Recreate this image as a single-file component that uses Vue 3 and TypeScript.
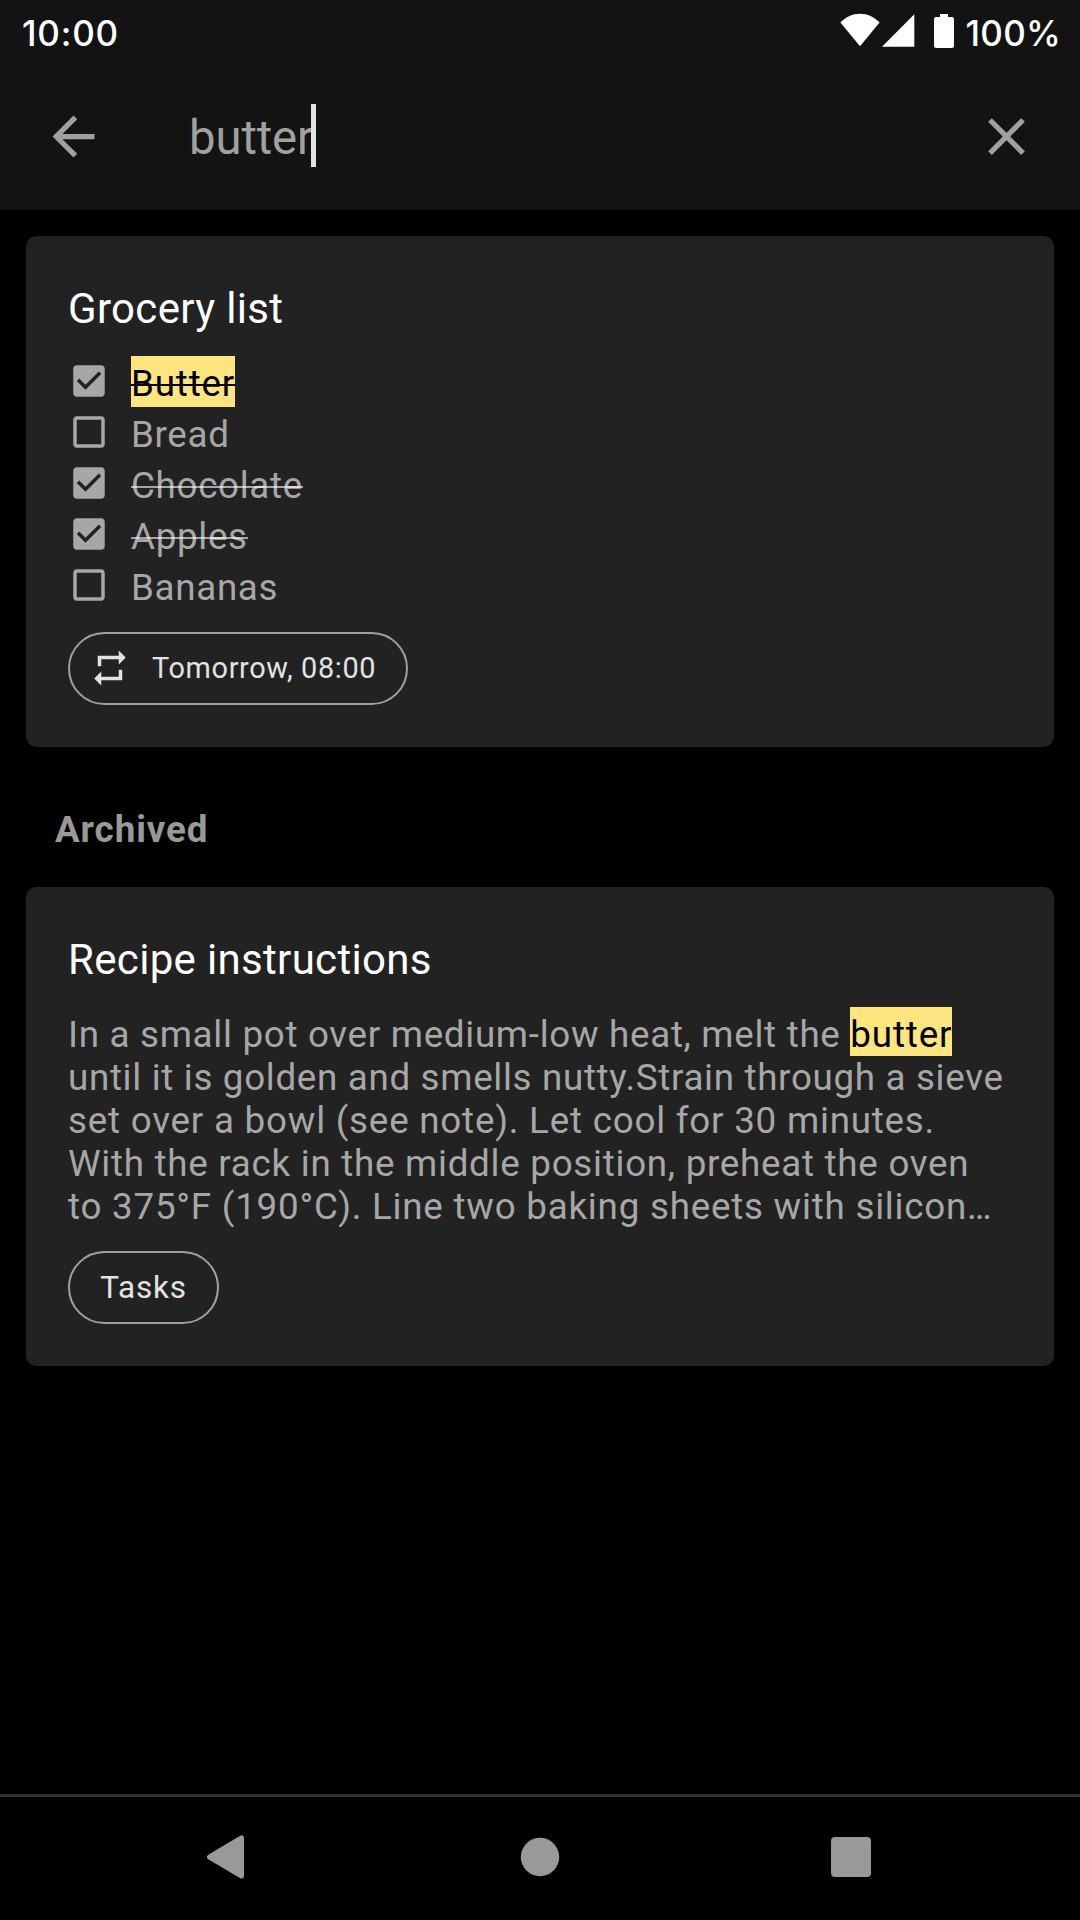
<script setup lang="ts">
interface Item {
  text: string
  done: boolean
  match?: boolean
}

interface Line {
  text: string
  hit?: string
  tracking: number
}

const items: Item[] = [
  { text: 'Butter', done: true, match: true },
  { text: 'Bread', done: false },
  { text: 'Chocolate', done: true },
  { text: 'Apples', done: true },
  { text: 'Bananas', done: false },
]

const query = 'butter'

const lines: Line[] = [
  { text: 'In a small pot over medium-low heat, melt the ', hit: query, tracking: 0.7 },
  { text: 'until it is golden and smells nutty.Strain through a sieve', tracking: 0.68 },
  { text: 'set over a bowl (see note). Let cool for 30 minutes.', tracking: 0.78 },
  { text: 'With the rack in the middle position, preheat the oven', tracking: 0.73 },
  { text: 'to 375°F (190°C). Line two baking sheets with silicon…', tracking: 0.77 },
]
</script>

<template>
  <div class="screen">
    <header class="top">
      <div class="status">
        <span class="clock">10:00</span>
        <div class="indicators">
          <svg class="wifi" width="40" height="34" viewBox="0 0 40 34" fill="#fff">
            <path d="M20 33.2 0.4 9.6C6 4 12.600 0.800 20 0.800S34 4 39.600 9.600z" />
          </svg>
          <svg class="signal" width="33" height="33" viewBox="0 0 33 33" fill="#fff">
            <path d="M32.300 0.300V32.800H0z" />
          </svg>
          <svg class="battery" width="20" height="34" viewBox="0 0 20 34" fill="#fff">
            <path d="M6 0h8v3h4a2 2 0 0 1 2 2v27a2 2 0 0 1-2 2H2a2 2 0 0 1-2-2V5a2 2 0 0 1 2-2h4z" />
          </svg>
          <span class="percent">100%</span>
        </div>
      </div>
      <div class="toolbar">
        <svg class="icon" viewBox="0 0 24 24">
          <path d="M20 11H7.830l5.590-5.590L12 4l-8 8 8 8 1.410-1.410L7.830 13H20v-2z" />
        </svg>
        <div class="query"><span>{{ query }}</span><i class="caret"></i></div>
        <svg class="icon" viewBox="0 0 24 24">
          <path d="M19 6.410L17.590 5 12 10.590 6.410 5 5 6.410 10.590 12 5 17.590 6.410 19 12 13.410 17.590 19 19 17.590 13.410 12z" />
        </svg>
      </div>
    </header>

    <main class="content">
      <section class="card">
        <h2>Grocery list</h2>
        <ul class="list">
          <li v-for="item in items" :key="item.text">
            <svg class="check" viewBox="0 0 24 24">
              <path v-if="item.done" d="M19 3H5c-1.110 0-2 .9-2 2v14c0 1.100.890 2 2 2h14c1.110 0 2-.9 2-2V5c0-1.100-.890-2-2-2zm-9 14l-5-5 1.410-1.410L10 14.170l7.590-7.590L19 8l-9 9z" />
              <path v-else d="M19 5v14H5V5h14m0-2H5c-1.100 0-2 .9-2 2v14c0 1.100.9 2 2 2h14c1.100 0 2-.9 2-2V5c0-1.100-.9-2-2-2z" />
            </svg>
            <span class="label" :class="{ done: item.done, hit: item.match }">{{ item.text }}</span>
          </li>
        </ul>
        <div class="chip reminder">
          <svg class="repeat" viewBox="0 0 24 24">
            <path d="M7 7h10v3l4-4-4-4v3H5v6h2V7zm10 10H7v-3l-4 4 4 4v-3h12v-6h-2v4z" />
          </svg>
          <span>Tomorrow, 08:00</span>
        </div>
      </section>

      <h3>Archived</h3>

      <section class="card">
        <h2>Recipe instructions</h2>
        <div class="body">
          <div v-for="line in lines" :key="line.text" :style="{ letterSpacing: line.tracking + 'px' }">{{ line.text }}<mark v-if="line.hit">{{ line.hit }}</mark></div>
        </div>
        <div class="chip label-chip"><span>Tasks</span></div>
      </section>
    </main>

    <nav class="nav">
      <svg class="back" width="38" height="44" viewBox="0 0 38 44">
        <path d="M34.500 3V41L2.500 22z" fill="#999" stroke="#999" stroke-width="5" stroke-linejoin="round" />
      </svg>
      <svg class="home" width="40" height="40" viewBox="0 0 40 40"><circle cx="20" cy="20" r="19.200" fill="#999" /></svg>
      <svg width="40" height="40" viewBox="0 0 40 40"><rect width="40" height="40" rx="4" fill="#999" /></svg>
    </nav>
  </div>
</template>

<style>
body {
  background: #000;
}
</style>

<style scoped>
.screen {
  width: 1080px;
  height: 1920px;
  display: flex;
  flex-direction: column;
  overflow: hidden;
  background: #000;
  font-family: Roboto, "Liberation Sans", sans-serif;
}
.screen * {
  box-sizing: border-box;
}
svg {
  display: block;
  flex: none;
}
.top {
  height: 210px;
  background: #131313;
}
.status {
  height: 63px;
  padding: 0 20px 0 22px;
  display: flex;
  justify-content: space-between;
  color: #fff;
  font: 500 35px/66px Inter, sans-serif;
}
.clock {
  letter-spacing: 0.8px;
}
.percent {
  margin-right: -1px;
  letter-spacing: 0.25px;
}
.indicators {
  display: flex;
}
.wifi {
  margin-top: 13px;
}
.signal {
  margin: 14px 0 0 2px;
}
.battery {
  margin: 14px 12px 0 19px;
}
.toolbar {
  height: 147px;
  padding: 0 42px;
  display: flex;
  align-items: center;
}
.icon {
  width: 63px;
  height: 63px;
  fill: #a0a0a0;
}
.query {
  flex: 1;
  margin-left: 84px;
  display: flex;
  align-items: center;
  color: #a0a0a0;
  font-size: 47.25px;
  line-height: 56px;
  letter-spacing: -0.1px;
}
.query span {
  padding-top: 3px;
}
.caret {
  width: 5px;
  height: 63px;
  margin: -2px 0 0 -1.500px;
  background: #e3e3e3;
}
.content {
  flex: 1;
  padding: 26px;
}
.card {
  background: #222;
  border-radius: 10.5px;
  padding: 48px 42px 42px;
}
h2 {
  margin: 0;
  color: #fff;
  font-size: 42px;
  font-weight: 400;
  line-height: 50px;
  letter-spacing: 0.33px;
}
.list {
  list-style: none;
  margin: 22px 0 0;
  padding: 0;
}
.list li {
  height: 51px;
  display: flex;
}
.check {
  width: 42px;
  height: 42px;
  margin-top: 4px;
  fill: #a7a7a7;
}
.label {
  position: relative;
  margin-left: 21px;
  height: 51px;
  padding-top: 6px;
  line-height: 43px;
  color: #a7a7a7;
  font-size: 36.75px;
  letter-spacing: 0.68px;
}
.done::after {
  content: "";
  position: absolute;
  left: 0;
  right: 0;
  top: 28px;
  height: 2px;
  background: rgba(255, 255, 255, 0.6);
}
.hit {
  color: #000;
  background: #ffe57f;
  letter-spacing: 0.82px;
}
.hit::after {
  background: #000;
}
.chip {
  width: fit-content;
  height: 73px;
  display: flex;
  align-items: center;
  border: 2px solid #a0a0a0;
  border-radius: 37px;
  color: #e3e3e3;
}
.reminder {
  margin-top: 21px;
  width: 340px;
  padding: 0 0 1px 19px;
  font-size: 28.875px;
  letter-spacing: 0.65px;
}
.repeat {
  width: 42px;
  height: 42px;
  margin-right: 21px;
  fill: #e3e3e3;
}
h3 {
  margin: 61px 0 35px 29px;
  height: 44px;
  color: #999;
  font-size: 36.75px;
  font-weight: 700;
  line-height: 44px;
  letter-spacing: 0.9px;
}
.body {
  margin-top: 28px;
  color: #a7a7a7;
  font-size: 36.75px;
  line-height: 43px;
  white-space: nowrap;
}
.body > div {
  height: 43px;
}
mark {
  padding-top: 6px;
  color: #000;
  background: #ffe57f;
  letter-spacing: 0.85px;
}
.label-chip {
  margin-top: 23px;
  width: 151px;
  justify-content: center;
  font-size: 31.500px;
  letter-spacing: 0.8px;
}
.nav {
  height: 126px;
  border-top: 3px solid #333;
  padding: 0 0 3px 207px;
  display: flex;
  align-items: center;
}
.back {
  margin-right: 275px;
}
.home {
  margin-right: 271px;
}
</style>
